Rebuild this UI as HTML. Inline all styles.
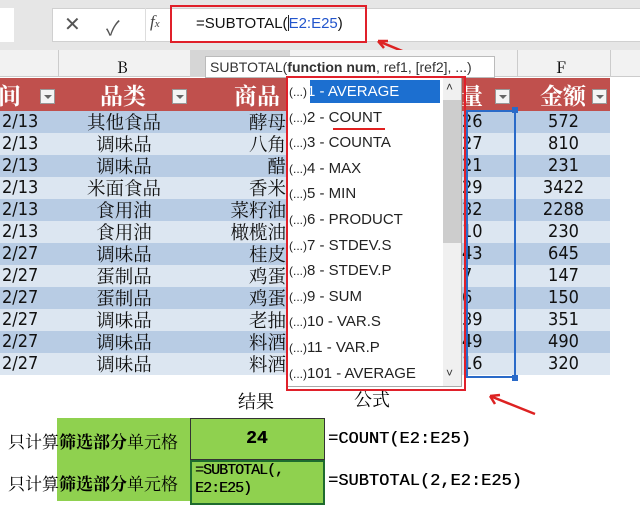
<!DOCTYPE html><html><head><meta charset="utf-8"><style>
*{margin:0;padding:0;box-sizing:border-box}
body{width:640px;height:501px;overflow:hidden;background:#fff;position:relative;font-family:"Liberation Sans","Noto Sans CJK SC",sans-serif}
.a{position:absolute}
.cj{font-family:"Noto Serif CJK SC","Noto Sans CJK SC",serif}
.row{position:absolute;left:0;width:610px;height:22px;font-size:18.5px;line-height:22px;color:#111}
.row span{position:absolute;top:0}
.n{font-family:"Liberation Sans Narrow","DejaVu Sans Condensed","Liberation Sans",sans-serif;font-weight:300}
.it{position:absolute;left:289px;font-size:15px;color:#222;height:23px;line-height:23px}
.fb{position:absolute;width:15px;height:15px;background:#f4f4f4;border:1px solid #999;top:89px}
.fb:after{content:"";position:absolute;left:3px;top:5px;border-left:4px solid transparent;border-right:4px solid transparent;border-top:4px solid #666}
.m{font-family:'Liberation Mono',monospace;text-shadow:0.4px 0 0 #111}
.h{font-size:23px;color:#fff;font-weight:bold;top:78px}
</style></head><body>
<div class="a" style="left:0;top:0;width:640px;height:50px;background:#e6e6e6"></div>
<div class="a" style="left:0;top:8px;width:14px;height:34px;background:#fff"></div>
<div class="a" style="left:52px;top:8px;width:590px;height:34px;background:#fff;border:1px solid #d0d0d0"></div>
<div class="a" style="left:64px;top:12px;font-size:20px;color:#555">✕</div>
<div class="a" style="left:106px;top:12px;font-size:20px;color:#555">✓</div>
<div class="a" style="left:150px;top:12px;font-size:17px;color:#444;font-style:italic;font-family:'Liberation Serif',serif">f<span style="font-size:11px">x</span></div>
<div class="a" style="left:145px;top:8px;width:1px;height:34px;background:#ddd"></div>
<div class="a" style="left:170px;top:5px;width:197px;height:38px;border:2.5px solid #e0202a"></div>
<div class="a" style="left:196px;top:15px;font-size:15px;color:#111">=SUBTOTAL(<span style="display:inline-block;width:1px;height:16px;background:#222;vertical-align:-3px"></span><span style="color:#2255cc">E2:E25</span>)</div>
<svg class="a" style="left:370px;top:35px" width="50" height="25"><path d="M42 20 L8 6 M8 6 L18 6 M8 6 L14 13" stroke="#d22" stroke-width="2.5" fill="none"/></svg>
<div class="a" style="left:0;top:50px;width:640px;height:27px;background:#f2f2f2;border-bottom:1px solid #ccc"></div>
<div class="a" style="left:58px;top:50px;width:1px;height:27px;background:#ccc"></div>
<div class="a" style="left:190px;top:50px;width:1px;height:27px;background:#ccc"></div>
<div class="a" style="left:190px;top:50px;width:100px;height:27px;background:#d6d6d6"></div>
<div class="a" style="left:517px;top:50px;width:1px;height:27px;background:#ccc"></div>
<div class="a" style="left:610px;top:50px;width:1px;height:27px;background:#ccc"></div>
<div class="a cj" style="left:117px;top:55px;font-size:16px">B</div>
<div class="a cj" style="left:556px;top:55px;font-size:16px">F</div>
<div class="a" style="left:205px;top:56px;width:290px;height:22px;background:#fff;border:1px solid #bbb;font-size:14px;line-height:20px;padding-left:4px;color:#333">SUBTOTAL(<b>function num</b>, ref1, [ref2], ...)</div>
<div class="a" style="left:0;top:78px;width:610px;height:33px;background:#c0504d"></div>
<div class="a cj h" style="left:-2px">间</div>
<div class="a cj h" style="left:100px">品类</div>
<div class="a cj h" style="left:234px">商品</div>
<div class="a cj h" style="left:460px">量</div>
<div class="a cj h" style="left:540px">金额</div>
<div class="fb" style="left:40px"></div><div class="fb" style="left:172px"></div><div class="fb" style="left:495px"></div><div class="fb" style="left:592px"></div>
<div id="rows"></div>
<script>
var d=[["2/13","其他食品","酵母","26","572"],["2/13","调味品","八角","27","810"],["2/13","调味品","醋","21","231"],["2/13","米面食品","香米","29","3422"],["2/13","食用油","菜籽油","32","2288"],["2/13","食用油","橄榄油","10","230"],["2/27","调味品","桂皮","43","645"],["2/27","蛋制品","鸡蛋","7","147"],["2/27","蛋制品","鸡蛋","6","150"],["2/27","调味品","老抽","39","351"],["2/27","调味品","料酒","49","490"],["2/27","调味品","料酒","16","320"]];
var h="";d.forEach(function(r,i){var t=111+22*i;h+='<div class="row cj" style="top:'+t+'px;background:'+(i%2?'#dce6f1':'#b8cce4')+'"><span class="n" style="left:2px;font-size:18px">'+r[0]+'</span><span style="left:58px;width:132px;text-align:center">'+r[1]+'</span><span style="left:190px;width:96px;text-align:right">'+r[2]+'</span><span class="n" style="left:462px;font-size:18px">'+r[3]+'</span><span class="n" style="left:517px;width:93px;text-align:center;font-size:18px">'+r[4]+'</span></div>'});
document.getElementById("rows").innerHTML=h;
</script>
<div class="a" style="left:466px;top:110px;width:50px;height:268px;border:2px solid #2a6ac8"></div>
<div class="a" style="left:512px;top:107px;width:6px;height:6px;background:#2a6ac8"></div>
<div class="a" style="left:512px;top:375px;width:6px;height:6px;background:#2a6ac8"></div>
<div class="a" style="left:287px;top:77px;width:175px;height:310px;background:#fff;border:1px solid #aaa"></div>
<div class="a" style="left:310px;top:80px;width:130px;height:23px;background:#1c6fd0"></div>
<div class="a" style="left:443px;top:78px;width:18px;height:308px;background:#f0f0f0"></div>
<div class="a" style="left:443px;top:100px;width:18px;height:143px;background:#cdcdcd"></div>
<div class="a" style="left:446px;top:80px;font-size:12px;color:#333">˄</div>
<div class="a" style="left:446px;top:366px;font-size:12px;color:#333">˅</div>
<div id="its"></div>
<script>
var L=["1 - AVERAGE","2 - COUNT","3 - COUNTA","4 - MAX","5 - MIN","6 - PRODUCT","7 - STDEV.S","8 - STDEV.P","9 - SUM","10 - VAR.S","11 - VAR.P","101 - AVERAGE"];var g="";
L.forEach(function(s,i){g+='<div class="it" style="top:'+(80+25.6*i)+'px"><span style="font-size:12px">(...)</span><span style="'+(i==0?'color:#fff;':'')+'">'+s+'</span></div>'});
document.getElementById("its").innerHTML=g;
</script>
<div class="a" style="left:333px;top:128px;width:52px;height:2px;background:#e02020"></div>
<div class="a" style="left:286px;top:76px;width:180px;height:315px;border:2.5px solid #e0202a"></div>
<svg class="a" style="left:480px;top:388px" width="60" height="30"><path d="M55 26 L10 8 M10 8 L20 7 M10 8 L15 16" stroke="#d22" stroke-width="2.5" fill="none"/></svg>
<div class="a cj" style="left:238px;top:388px;font-size:18px">结果</div>
<div class="a cj" style="left:354px;top:386px;font-size:18px">公式</div>
<div class="a" style="left:57px;top:418px;width:133px;height:83px;background:#8fd14f"></div>
<div class="a" style="left:190px;top:418px;width:135px;height:42px;background:#8fd14f;border:1px solid #333"></div>
<div class="a" style="left:190px;top:460px;width:135px;height:45px;background:#8fd14f;border:2px solid #1e6b2e"></div>
<div class="a cj" style="left:8px;top:428px;font-size:17px">只计算<b>筛选部分</b>单元格</div>
<div class="a cj" style="left:8px;top:470px;font-size:17px">只计算<b>筛选部分</b>单元格</div>
<div class="a m" style="left:246px;top:429px;font-size:18px;font-weight:bold">24</div>
<div class="a m" style="left:195px;top:462px;font-size:15px;line-height:18px;letter-spacing:-1px">=SUBTOTAL(,<br>E2:E25)</div>
<div class="a m" style="left:328px;top:430px;font-size:17px">=COUNT(E2:E25)</div>
<div class="a m" style="left:328px;top:472px;font-size:17px">=SUBTOTAL(2,E2:E25)</div>
</body></html>
